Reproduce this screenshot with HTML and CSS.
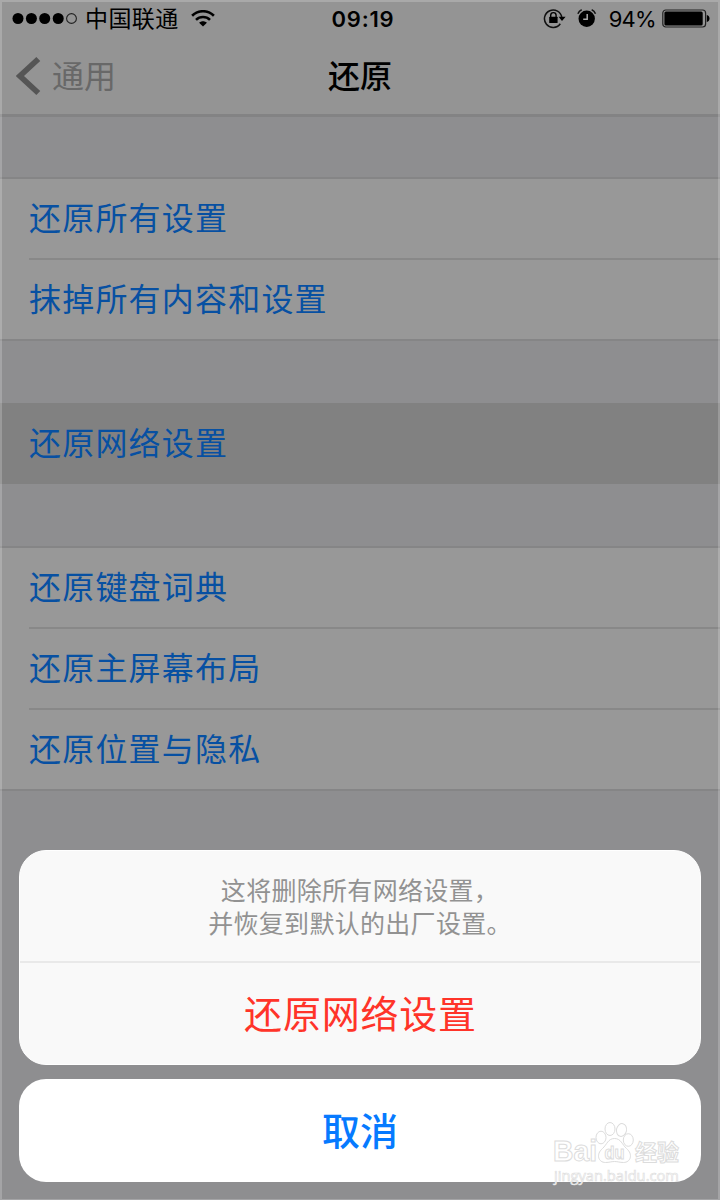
FILE: index.html
```html
<!DOCTYPE html>
<html lang="zh-CN">
<head>
<meta charset="utf-8">
<title>还原</title>
<link rel="stylesheet" href="styles.css">
</head>
<body>
<div class="screen">
  <header class="header">
    <div class="status">
      <div class="status-left">
        <svg class="signal" width="66" height="14" viewBox="0 0 66 14"><circle cx="6" cy="6.500" r="5.500"/><circle cx="19.400" cy="6.500" r="5.500"/><circle cx="32.700" cy="6.500" r="5.500"/><circle cx="46.200" cy="6.500" r="5.500"/><circle cx="59.500" cy="6.500" r="4.900" fill="none" stroke="#222" stroke-width="1.1"/></svg>
        <span class="carrier">中国联通</span>
        <svg class="wifi" width="24" height="18" viewBox="0 0 24 18"><g fill="none" stroke="#000" stroke-width="2.6"><path d="M1.1 5.800C7.3 -.3 16.700 -.3 22.900 5.800"/><path d="M5 9.900c4-3.800 10-3.800 14 0"/></g><path d="M8.100 12.700c2.300-2 5.500-2 7.800 0L12 16.600z"/></svg>
      </div>
      <span class="clock">09:19</span>
      <div class="status-right">
        <svg class="lock" width="24" height="20" viewBox="0 0 24 20"><path d="M17.300 14.700A8.700 8.700 0 1 1 18.800 8.600" fill="none" stroke="#111" stroke-width="1.5"/><path d="M15.600 7.700h7L19 11.900z"/><rect x="6.200" y="7.700" width="8.400" height="6.300" rx=".6"/><path d="M7.700 8V6.300a2.700 2.700 0 0 1 5.400 0V8" fill="none" stroke="#000" stroke-width="1.400"/></svg>
        <svg class="alarm" width="20" height="20" viewBox="0 0 20 20"><circle cx="9.700" cy="9.700" r="8.200"/><path d="M10.200 5v5.200H6.200" fill="none" stroke="#aaa" stroke-width="1.500"/><path d="M.9 4.800Q2.100 1.800 4.700.8M14.700.8q2.600 1 3.800 4" fill="none" stroke="#111" stroke-width="1.600"/></svg>
        <span class="percent">94%</span>
        <svg class="battery" width="48" height="20" viewBox="0 0 48 20"><rect x=".8" y="1" width="42.800" height="17" rx="3" fill="none" stroke="#222" stroke-width="1.200"/><rect x="2.400" y="2.500" width="38.300" height="14" rx="1.500"/><path d="M44.800 6.100q2.700.6 2.700 3.500t-2.700 3.500z"/></svg>
      </div>
    </div>
    <nav class="nav">
      <div class="back">
        <svg width="26" height="40" viewBox="0 0 26 40"><path d="M22.300 3 3.900 20l18.400 17" fill="none" stroke="#555" stroke-width="5.700"/></svg>
        <span>通用</span>
      </div>
      <h1 class="title">还原</h1>
    </nav>
  </header>
  <main class="groups">
    <section class="group">
      <div class="row"><span>还原所有设置</span></div>
      <div class="row"><span>抹掉所有内容和设置</span></div>
    </section>
    <section class="group pressed">
      <div class="row"><span>还原网络设置</span></div>
    </section>
    <section class="group">
      <div class="row"><span>还原键盘词典</span></div>
      <div class="row"><span>还原主屏幕布局</span></div>
      <div class="row"><span>还原位置与隐私</span></div>
    </section>
  </main>
  <div class="sheet">
    <div class="card">
      <p class="message">这将删除所有网络设置，<br>并恢复到默认的出厂设置。</p>
      <div class="action">还原网络设置</div>
    </div>
    <div class="cancel">取消</div>
  </div>
  <div class="watermark">
    <svg class="mark" width="134" height="40" viewBox="0 0 134 40" overflow="visible">
      <text class="latin" x="0" y="40" textLength="44" lengthAdjust="spacingAndGlyphs">Bai</text>
      <ellipse cx="48" cy="16.500" rx="5" ry="6.300"/><ellipse cx="57" cy="8" rx="5" ry="6.500"/><ellipse cx="68.500" cy="9" rx="5" ry="6.500" transform="rotate(12 68.500 9)"/><ellipse cx="75.300" cy="19" rx="5" ry="6.300"/>
      <path d="M61.500 17.500c6.500 0 7.500 6 12 10 7 6 4 14-3 14-4 0-5.500-1-9-1s-5 1-9 1c-7 0-10-8-3-14 4.500-4 5.500-10 12-10z"/>
      <text class="du" x="51.500" y="38" textLength="20" lengthAdjust="spacingAndGlyphs">du</text>
      <text class="cjk" x="82" y="39" textLength="44">经验</text>
    </svg>
    <span class="url">jingyan.baidu.com</span>
  </div>
</div>
</body>
</html>
```
FILE: styles.css
```css
* { box-sizing: border-box; margin: 0; padding: 0; }
body { width: 720px; height: 1200px; overflow: hidden; }
svg { display: block; flex: none; }
.screen {
  position: relative;
  width: 720px;
  height: 1200px;
  background: #8e8e90;
  font-family: "Inter", "Noto Sans CJK SC", sans-serif;
}
.screen::after {
  content: "";
  position: absolute;
  inset: 0;
  border: 2px solid rgba(255, 255, 255, .2);
  border-bottom-width: 1px;
  pointer-events: none;
}
.header { height: 117px; background: #949494; border-bottom: 3px solid #838384; }
.status {
  height: 37px;
  padding: 0 10px 0 12px;
  display: grid;
  grid-template-columns: 1fr auto 1fr;
  align-items: center;
}
.status-left, .status-right { display: flex; align-items: center; }
.status-right { justify-content: flex-end; }
.carrier { margin-left: 7px; padding-top: 1px; font-size: 23px; letter-spacing: .4px; line-height: 34px; }
.wifi { margin-left: 12px; }
.clock { font-size: 22px; font-weight: 600; letter-spacing: .8px; margin-left: 4px; }
.alarm { margin-left: 10px; }
.percent { margin-left: 12px; font-size: 22px; letter-spacing: -.7px; }
.battery { margin-left: 6px; }
.nav {
  height: 77px;
  padding: 1px 16px 0;
  display: grid;
  grid-template-columns: 1fr auto 1fr;
  align-items: center;
}
.back { display: flex; align-items: center; gap: 10px; font-size: 32px; line-height: 38px; color: #686868; }
.title { font-size: 32px; font-weight: 500; line-height: 40px; padding-top: 1px; }
.back span { padding-top: 1px; }
.groups { padding-top: 60px; display: flex; flex-direction: column; gap: 62px; }
.group {
  padding-left: 29px;
  background: #989898;
  border-top: 2px solid #858586;
  border-bottom: 2px solid #858586;
}
.row {
  height: 79px;
  padding-bottom: 6px;
  display: flex;
  align-items: center;
  font-size: 32px;
  letter-spacing: 1.2px;
  color: #0750a2;
}
.row + .row { height: 81px; border-top: 2px solid #888; }
.pressed { background: #818181; border: 0; padding-top: 1px; padding-bottom: 1px; }
.sheet { position: absolute; left: 19px; right: 19px; top: 850px; display: flex; flex-direction: column; gap: 14px; text-align: center; }
.card { height: 215px; border-radius: 27px; background: #f9f9f9; border: 1px solid #fff; }
.message { height: 110px; padding-top: 24px; font-size: 25px; line-height: 33px; letter-spacing: .3px; color: #929292; }
.action { height: 103px; border-top: 2px solid #e9e9e9; font-size: 38px; line-height: 103px; letter-spacing: .8px; text-indent: 1px; color: #ff3429; }
.cancel { height: 103px; border-radius: 27px; background: #fff; font-size: 38px; font-weight: 500; line-height: 104px; color: #067aff; }
.watermark { position: absolute; left: 553px; top: 1121px; }
.mark { fill: #fff; stroke: #dcdcdc; stroke-width: 1px; font-weight: 700; }
.latin { font: 700 29px "Liberation Sans", sans-serif; }
.du { font: 700 18px "Liberation Sans", sans-serif; }
.cjk { font: 700 22px "Noto Sans CJK SC", sans-serif; }
.url { display: block; padding: 4px 0 0 1px; font: 400 14.7px/20px "Open Sans", sans-serif; color: #fff; -webkit-text-stroke: .6px #dcdcdc; }
```
